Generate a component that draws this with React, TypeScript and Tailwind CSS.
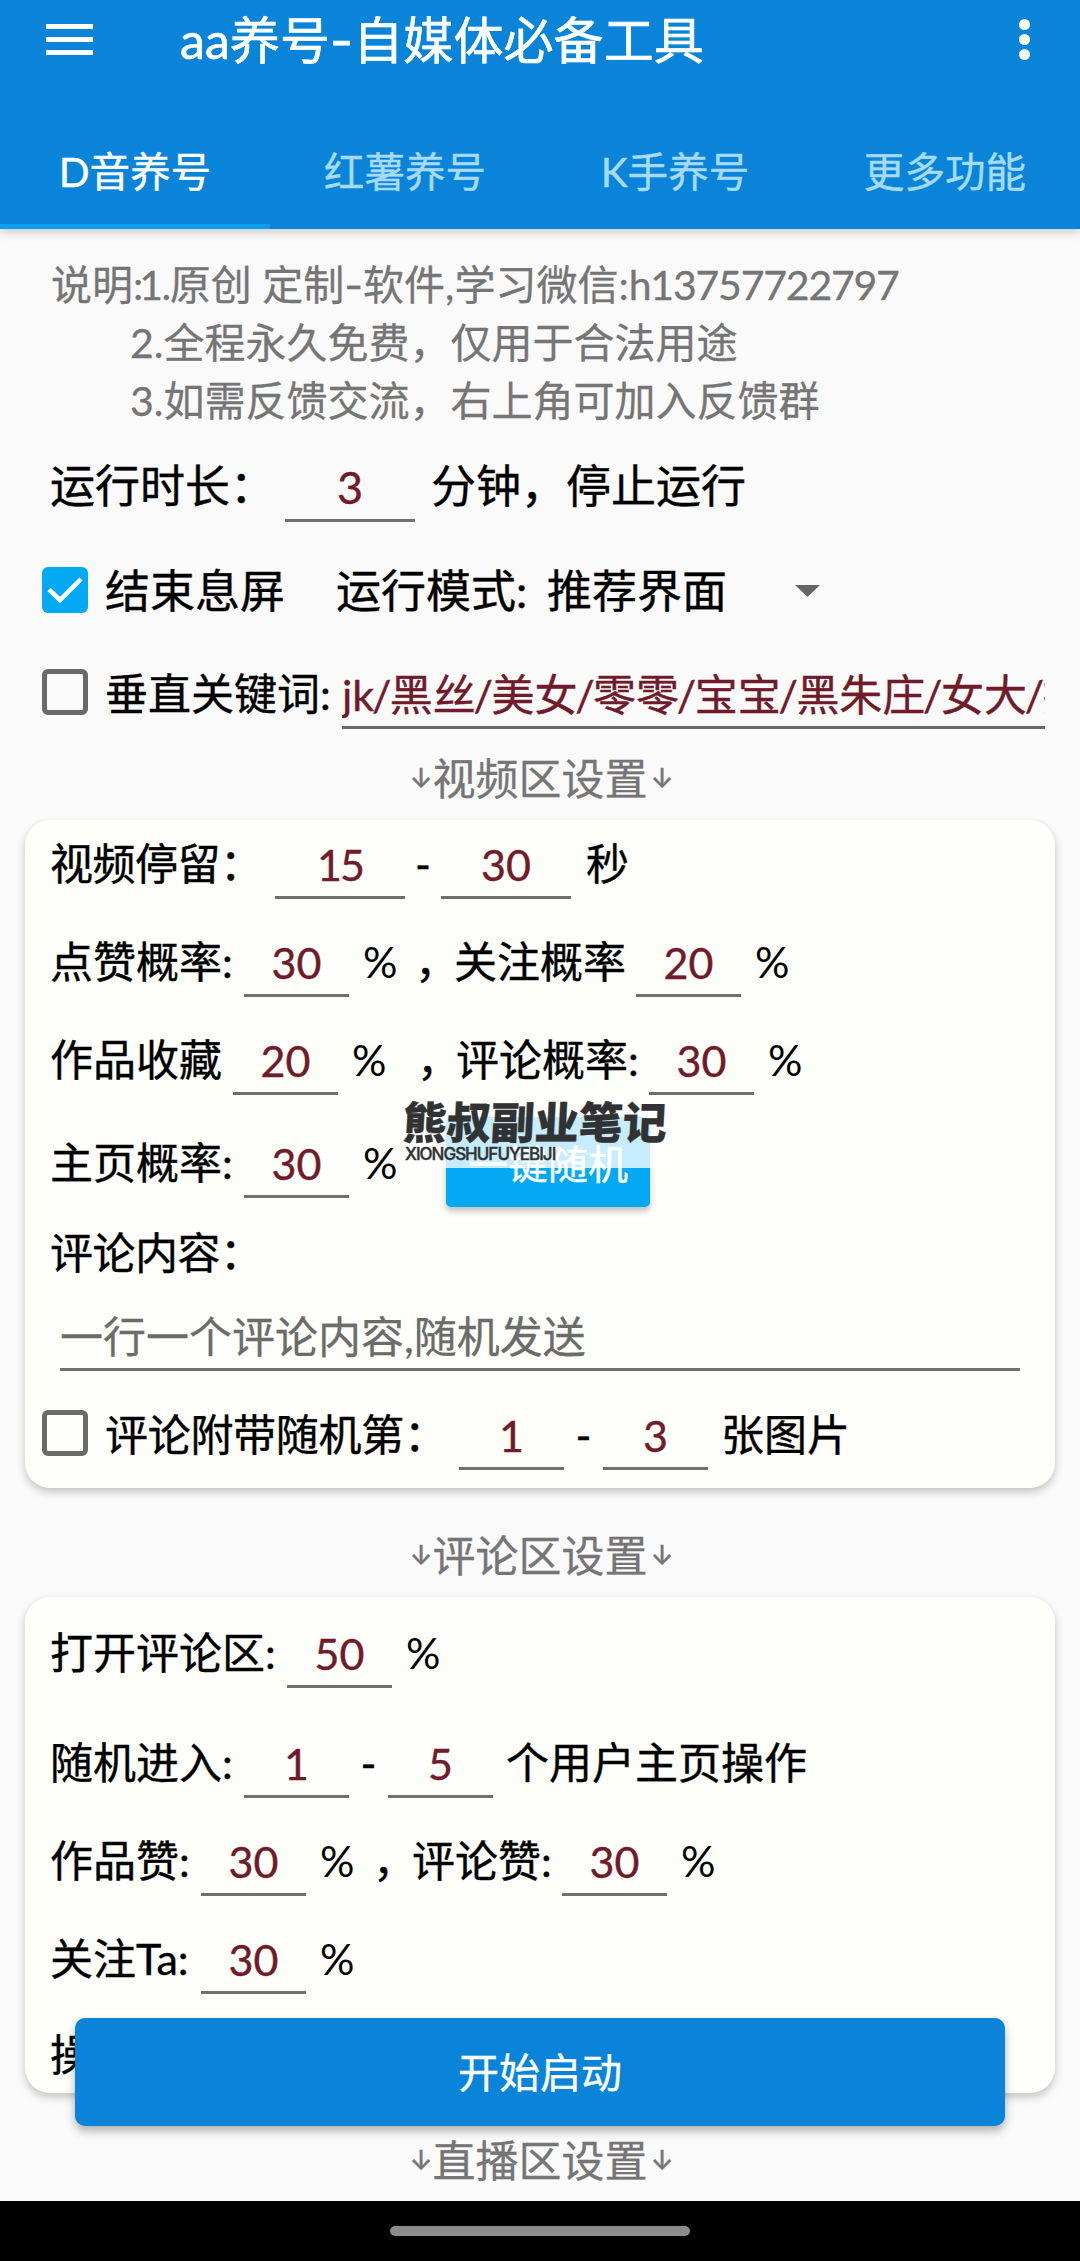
import type { ReactNode } from "react"
import { clsx } from "clsx"

const tabs = ["D音养号", "红薯养号", "K手养号", "更多功能"]
const keywords = ["jk", "黑丝", "美女", "零零", "宝宝", "黑朱庄", "女大", "技"]

interface ChildrenProps {
  className?: string
  children?: ReactNode
}

function Row({ className, children }: ChildrenProps) {
  return (
    <div
      className={clsx(
        "flex h-[72px] items-center whitespace-pre leading-[75px] text-black [-webkit-text-stroke:0.4px]",
        className ?? "mt-[26px]",
        !className?.includes("text-[") && "text-[43px]"
      )}
    >
      {children}
    </div>
  )
}

function Field({ className, children }: ChildrenProps) {
  return (
    <div className={clsx("h-[72px] shrink-0 border-b-[3px] border-[#6f6f6d] text-center text-[#701a2a]", className ?? "w-[105px]")}>
      {children}
    </div>
  )
}

function Label({ className, children }: ChildrenProps) {
  return <span className={clsx("shrink-0", className)}>{children}</span>
}

function Percent({ className }: { className?: string }) {
  return <span className={clsx("ml-[14px] shrink-0 [-webkit-text-stroke:0px]", className)}>%</span>
}

function Dash() {
  return <span className="font-[Inter]">-</span>
}

function Checkbox({ checked }: { checked?: boolean }) {
  return (
    <div
      className={clsx(
        "mb-[3px] h-[46px] w-[46px] shrink-0 rounded-[6px]",
        checked ? "bg-[#04a9f4]" : "border-[5px] border-[#6a6a68]"
      )}
    >
      {checked && (
        <svg viewBox="0 0 46 46" className="h-full w-full">
          <path d="M7 22.5 L18 33 L39 12" fill="none" stroke="#fff" strokeWidth="4.5" />
        </svg>
      )}
    </div>
  )
}

function SectionTitle({ className, children }: ChildrenProps) {
  return (
    <div className={clsx("flex h-[60px] items-center justify-center gap-[3px] text-[43px] leading-[64px] text-[#757575] [-webkit-text-stroke:0.3px]", className)}>
      <span className="w-[20px] text-center font-[Inter] text-[27px] leading-[76px] font-medium">↓</span>
      <span>{children}</span>
      <span className="w-[20px] text-center font-[Inter] text-[27px] leading-[76px] font-medium">↓</span>
    </div>
  )
}

function Card({ className, children }: ChildrenProps) {
  return (
    <section className={clsx("mx-[25px] rounded-[25px] bg-[#fefffb] pl-[25px] shadow-[0_4px_8px_rgba(0,0,0,0.22)]", className)}>
      {children}
    </section>
  )
}

function Watermark() {
  return (
    <div className="absolute -top-[20px] -left-[42px] h-[71px] w-[272px] bg-white/78 text-left text-[#303234]">
      <div className="-ml-[1px] h-[50px] -skew-x-3 text-[44px] leading-[50px] font-black whitespace-nowrap">
        熊叔副业笔记
      </div>
      <div className="pl-[1px] font-[Inter] text-[17px] leading-[14px] font-medium tracking-[-1px]">XIONGSHUFUYEBIJI</div>
    </div>
  )
}

export default function App() {
  return (
    <div className="relative flex h-[2261px] w-[1080px] flex-col overflow-hidden bg-[#fafafa] font-[Lato,'Noto_Sans_CJK_SC',sans-serif]">
      <header className="h-[229px] shrink-0 bg-[#0984d9] shadow-[0_3px_10px_rgba(0,0,0,0.2)]">
        <div className="flex h-[78px] items-center pl-[46px] text-white">
          <div className="flex w-[134px] flex-col gap-[8px]">
            <div className="h-[5px] w-[47px] bg-white" />
            <div className="h-[5px] w-[47px] bg-white" />
            <div className="h-[5px] w-[47px] bg-white" />
          </div>
          <h1 className="pt-[2px] text-[50px] leading-[80px] tracking-[0.1px] [-webkit-text-stroke:0.7px]">
            aa养号<Dash />自媒体必备工具
          </h1>
          <div className="mr-[50px] ml-auto flex flex-col gap-[4px]">
            <div className="h-[11px] w-[11px] rounded-full bg-white" />
            <div className="h-[11px] w-[11px] rounded-full bg-white" />
            <div className="h-[11px] w-[11px] rounded-full bg-white" />
          </div>
        </div>
        <nav className="mt-[36px] grid grid-cols-4 text-center text-[40.6px] leading-[115px] [-webkit-text-stroke:0.4px]">
          {tabs.map((tab, i) => (
            <div key={tab} className={clsx("h-[115px]", i === 0 ? "border-b-[5px] border-[#0a9fe9] text-white" : "text-[#a5dbf9]")}>
              {tab}
            </div>
          ))}
        </nav>
      </header>

      <div className="mt-[27px] pl-[51px] text-[41px] leading-[58px] whitespace-pre text-[#757575] [-webkit-text-stroke:0.3px]">
        <p>
          说明:<span className="-ml-[4px] tracking-[-1.5px]">1.</span>原创 定制<Dash />软件,学习微信:<span className="tracking-[-1.2px]">h13757722797</span>
        </p>
        <p className="pl-[79px]">2.全程永久免费，仅用于合法用途</p>
        <p className="pl-[79px]">3.如需反馈交流，右上角可加入反馈群</p>
      </div>

      <Row className="mt-[20px] pl-[50px] text-[45px]">
        <Label className="w-[235px]">运行时长：</Label>
        <Field className="w-[130px]">3</Field>
        <Label className="ml-[16px]">分钟，停止运行</Label>
      </Row>

      <Row className="mt-[33px] pl-[42px] text-[45px]">
        <Checkbox checked />
        <Label className="ml-[17px] w-[231px]">结束息屏</Label>
        <Label className="w-[211px]">运行模式:</Label>
        <Label className="w-[248px]">推荐界面</Label>
        <div className="h-[12px] w-[25px] bg-[#666] [clip-path:polygon(0_0,100%_0,50%_100%)]" />
      </Row>

      <Row className="mt-[30px] pl-[42px]">
        <Checkbox />
        <Label className="ml-[17px] w-[237px]">垂直关键词:</Label>
        <div className="h-[72px] w-[703px] overflow-hidden border-b-[3px] border-[#6a6a68] text-[#701a2a]">
          {keywords.map((word, i) => (
            <span key={word}>
              {i > 0 && <span className="mr-[-1.5px] ml-[-2.3px]">/</span>}
              {word}
            </span>
          ))}
        </div>
      </Row>

      <SectionTitle className="mt-[20px]">视频区设置</SectionTitle>

      <Card className="mt-[11px] h-[668px] pt-[7px]">
        <Row className="">
          <Label className="w-[225px] tracking-[-0.5px]">视频停留：</Label>
          <Field className="w-[130px] tracking-[-2px]">15</Field>
          <Label className="w-[36px] text-center">-</Label>
          <Field className="w-[130px]">30</Field>
          <Label className="ml-[15px]">秒</Label>
        </Row>
        <Row>
          <Label className="w-[194px]">点赞概率:</Label>
          <Field>30</Field>
          <Percent className="w-[52px]" />
          <Label className="w-[39px]">，</Label>
          <Label className="w-[182px]">关注概率</Label>
          <Field>20</Field>
          <Percent />
        </Row>
        <Row>
          <Label className="w-[183px]">作品收藏</Label>
          <Field>20</Field>
          <Percent className="w-[65px]" />
          <Label className="w-[39px]">，</Label>
          <Label className="w-[193px]">评论概率:</Label>
          <Field>30</Field>
          <Percent />
        </Row>
        <Row className="mt-[31px]">
          <Label className="w-[194px]">主页概率:</Label>
          <Field>30</Field>
          <Percent className="w-[83px]" />
          <div className="relative h-[90px] w-[204px] shrink-0 rounded-[5px] bg-[#04a9f4] text-center text-[40px] leading-[94px] text-white shadow-[0_4px_6px_rgba(0,0,0,0.25)]">
            一键随机
            <Watermark />
          </div>
        </Row>
        <Row className="mt-[18px]">
          <Label className="tracking-[-0.5px]">评论内容：</Label>
        </Row>
        <div className="mt-[11px] ml-[10px] h-[72px] w-[960px] border-b-[3px] border-[#6f6f6d] text-[43px] leading-[75px] text-[#6b6b68] [-webkit-text-stroke:0.3px]">
          一行一个评论内容,随机发送
        </div>
        <Row className="mt-[27px] -ml-[8px]">
          <Checkbox />
          <Label className="ml-[17px] w-[354px] tracking-[-0.3px]">评论附带随机第：</Label>
          <Field>1</Field>
          <Label className="w-[39px] text-center">-</Label>
          <Field>3</Field>
          <Label className="ml-[13px]">张图片</Label>
        </Row>
      </Card>

      <SectionTitle className="mt-[38px]">评论区设置</SectionTitle>

      <Card className="mt-[11px] h-[496px] pt-[19px]">
        <Row className="">
          <Label className="w-[237px]">打开评论区:</Label>
          <Field>50</Field>
          <Percent />
        </Row>
        <Row className="mt-[38px]">
          <Label className="w-[194px]">随机进入:</Label>
          <Field>1</Field>
          <Label className="w-[39px] text-center">-</Label>
          <Field>5</Field>
          <Label className="ml-[13px]">个用户主页操作</Label>
        </Row>
        <Row>
          <Label className="w-[151px]">作品赞:</Label>
          <Field>30</Field>
          <Percent className="w-[53px]" />
          <Label className="w-[39px]">，</Label>
          <Label className="w-[150px]">评论赞:</Label>
          <Field>30</Field>
          <Percent />
        </Row>
        <Row>
          <Label className="w-[151px]">关注Ta:</Label>
          <Field>30</Field>
          <Percent />
        </Row>
        <Row className="mt-[24px]">
          <Label>操</Label>
        </Row>
      </Card>

      <SectionTitle className="mt-[38px]">直播区设置</SectionTitle>

      <button className="absolute top-[2018px] left-[75px] h-[108px] w-[930px] rounded-[10px] bg-[#0984d9] text-[41px] leading-[110px] text-white shadow-[0_5px_10px_rgba(0,0,0,0.3)] [-webkit-text-stroke:0.4px]">
        开始启动
      </button>

      <footer className="mt-auto flex h-[60px] shrink-0 items-center justify-center bg-black">
        <div className="h-[10px] w-[300px] rounded-full bg-[#8c8c8c]" />
      </footer>
    </div>
  )
}
